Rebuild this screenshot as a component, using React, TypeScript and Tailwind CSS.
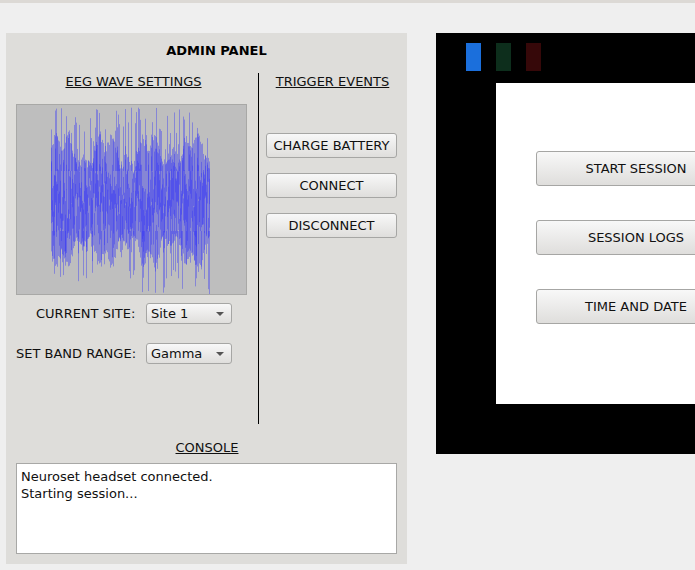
import React from 'react';

const font = "font-['DejaVu_Sans',sans-serif]";

// seeded so the wave looks the same on every load
function makeWave() {
  let seed = 48271;
  const rand = () => {
    seed = (seed * 1664525 + 1013904223) % 4294967296;
    return seed / 4294967296;
  };
  const segs: { x: number; y1: number; y2: number }[] = [];
  const cy = 96;
  for (let x = 0; x < 159; x += 1) {
    // slow wobble of the light body of the signal
    const body = 44 + 12 * Math.sin(x / 7) + 8 * Math.sin(x / 2.3);
    segs.push({ x, y1: cy - body - rand() * 10, y2: cy + body + rand() * 10 });
    // thin tall spikes with gaps between them
    if (rand() < 0.6) {
      const up = rand() < 0.55;
      segs.push({
        x,
        y1: up ? cy - 58 - rand() * 36 : cy + 30,
        y2: up ? cy - 30 : cy + 58 + rand() * 36,
      });
    }
    // short strokes that darken the middle band
    for (let i = 0; i < 2; i++) {
      const mid = (rand() - 0.5) * 64;
      const len = 14 + rand() * 50;
      segs.push({ x, y1: cy + mid - len / 2, y2: cy + mid + len / 2 });
    }
  }
  return segs;
}

const wave = makeWave();

const EegWave = () => (
  <div className="h-[191px] w-[231px] border border-[#a8a8a6] bg-[#bebebe]">
    <svg width="229" height="189" className="block">
      <g transform="translate(34.5 0)" stroke="#3a3af5" strokeOpacity="0.42" strokeWidth="1">
        {wave.map((s, i) => (
          <line key={i} x1={s.x} x2={s.x} y1={s.y1} y2={s.y2} />
        ))}
      </g>
    </svg>
  </div>
);

const Button = ({ label, className }: { label: string; className: string }) => (
  <div
    className={`flex items-center justify-center rounded-[3px] border border-[#a6a6a4] bg-gradient-to-b from-[#f8f8f8] to-[#dfdedc] text-[13px] text-[#101010] ${className}`}
  >
    {label}
  </div>
);

const Select = ({ value }: { value: string }) => (
  <div className="flex h-[21px] w-[86px] items-center justify-between rounded-[3px] border border-[#a6a6a4] bg-gradient-to-b from-[#f8f8f8] to-[#dfdedc] pl-[4px] pr-[7px] text-[13px] text-[#101010]">
    <span>{value}</span>
    <span className="h-0 w-0 border-x-[4px] border-t-[4px] border-x-transparent border-t-[#555555]" />
  </div>
);

const Light = ({ color }: { color: string }) => <div className={`h-[28px] w-[15px] ${color}`} />;

export default function App() {
  return (
    <div className={`h-[570px] w-[695px] overflow-hidden bg-[#efefef] ${font}`}>
      <div className="h-[3px] bg-[#dcd9d5]" />
      <div className="flex pl-[6px] pt-[30px]">
        {/* admin panel */}
        <div className="h-[531px] w-[401px] shrink-0 bg-[#dedddA] px-[10px]">
          <div className="pl-[20px] pt-[10px] text-center text-[13px] font-bold leading-[16px] text-black">ADMIN PANEL</div>
          <div className="mt-[14px] flex h-[351px]">
            <div className="w-[231px] shrink-0">
              <div className="pl-[4px] pt-[1px] text-center text-[13px] leading-[16px] text-[#101010] underline">EEG WAVE SETTINGS</div>
              <div className="mt-[14px]">
                <EegWave />
              </div>
              <div className="mt-[8px] flex h-[21px] items-center">
                <span className="ml-[20px] w-[110px] text-[13px] text-[#101010]">CURRENT SITE:</span>
                <Select value="Site 1" />
              </div>
              <div className="mt-[19px] flex h-[21px] items-center">
                <span className="w-[130px] text-[13px] text-[#101010]">SET BAND RANGE:</span>
                <Select value="Gamma" />
              </div>
            </div>
            <div className="ml-[11px] h-full w-px shrink-0 bg-black" />
            <div className="ml-[7px] w-[131px] shrink-0">
              <div className="pl-[2px] pt-[1px] text-center text-[13px] leading-[16px] text-[#101010] underline">TRIGGER EVENTS</div>
              <div className="mt-[43px] flex flex-col gap-[15px]">
                <Button label="CHARGE BATTERY" className="h-[25px]" />
                <Button label="CONNECT" className="h-[25px]" />
                <Button label="DISCONNECT" className="h-[25px]" />
              </div>
            </div>
          </div>
          <div className="mt-[16px] pl-px text-center text-[13px] leading-[16px] text-[#101010] underline">CONSOLE</div>
          <div className="mt-[7px] h-[91px] w-[381px] border border-[#a8a8a6] bg-white px-[4px] pt-[4px] text-[13px] leading-[17px] text-[#101010]">
            <div>Neuroset headset connected.</div>
            <div>Starting session...</div>
          </div>
        </div>

        {/* device */}
        <div className="ml-[29px] h-[421px] w-[400px] shrink-0 bg-black pl-[30px] pt-[10px]">
          <div className="flex gap-[15px]">
            <Light color="bg-[#1b6fdc]" />
            <Light color="bg-[#0d2e1c]" />
            <Light color="bg-[#360809]" />
          </div>
          <div className="ml-[30px] mt-[12px] h-[321px] bg-white pl-[40px] pt-[68px]">
            <div className="flex w-[200px] flex-col gap-[34px]">
              <Button label="START SESSION" className="h-[35px]" />
              <Button label="SESSION LOGS" className="h-[35px]" />
              <Button label="TIME AND DATE" className="h-[35px]" />
            </div>
          </div>
        </div>
      </div>
    </div>
  );
}
